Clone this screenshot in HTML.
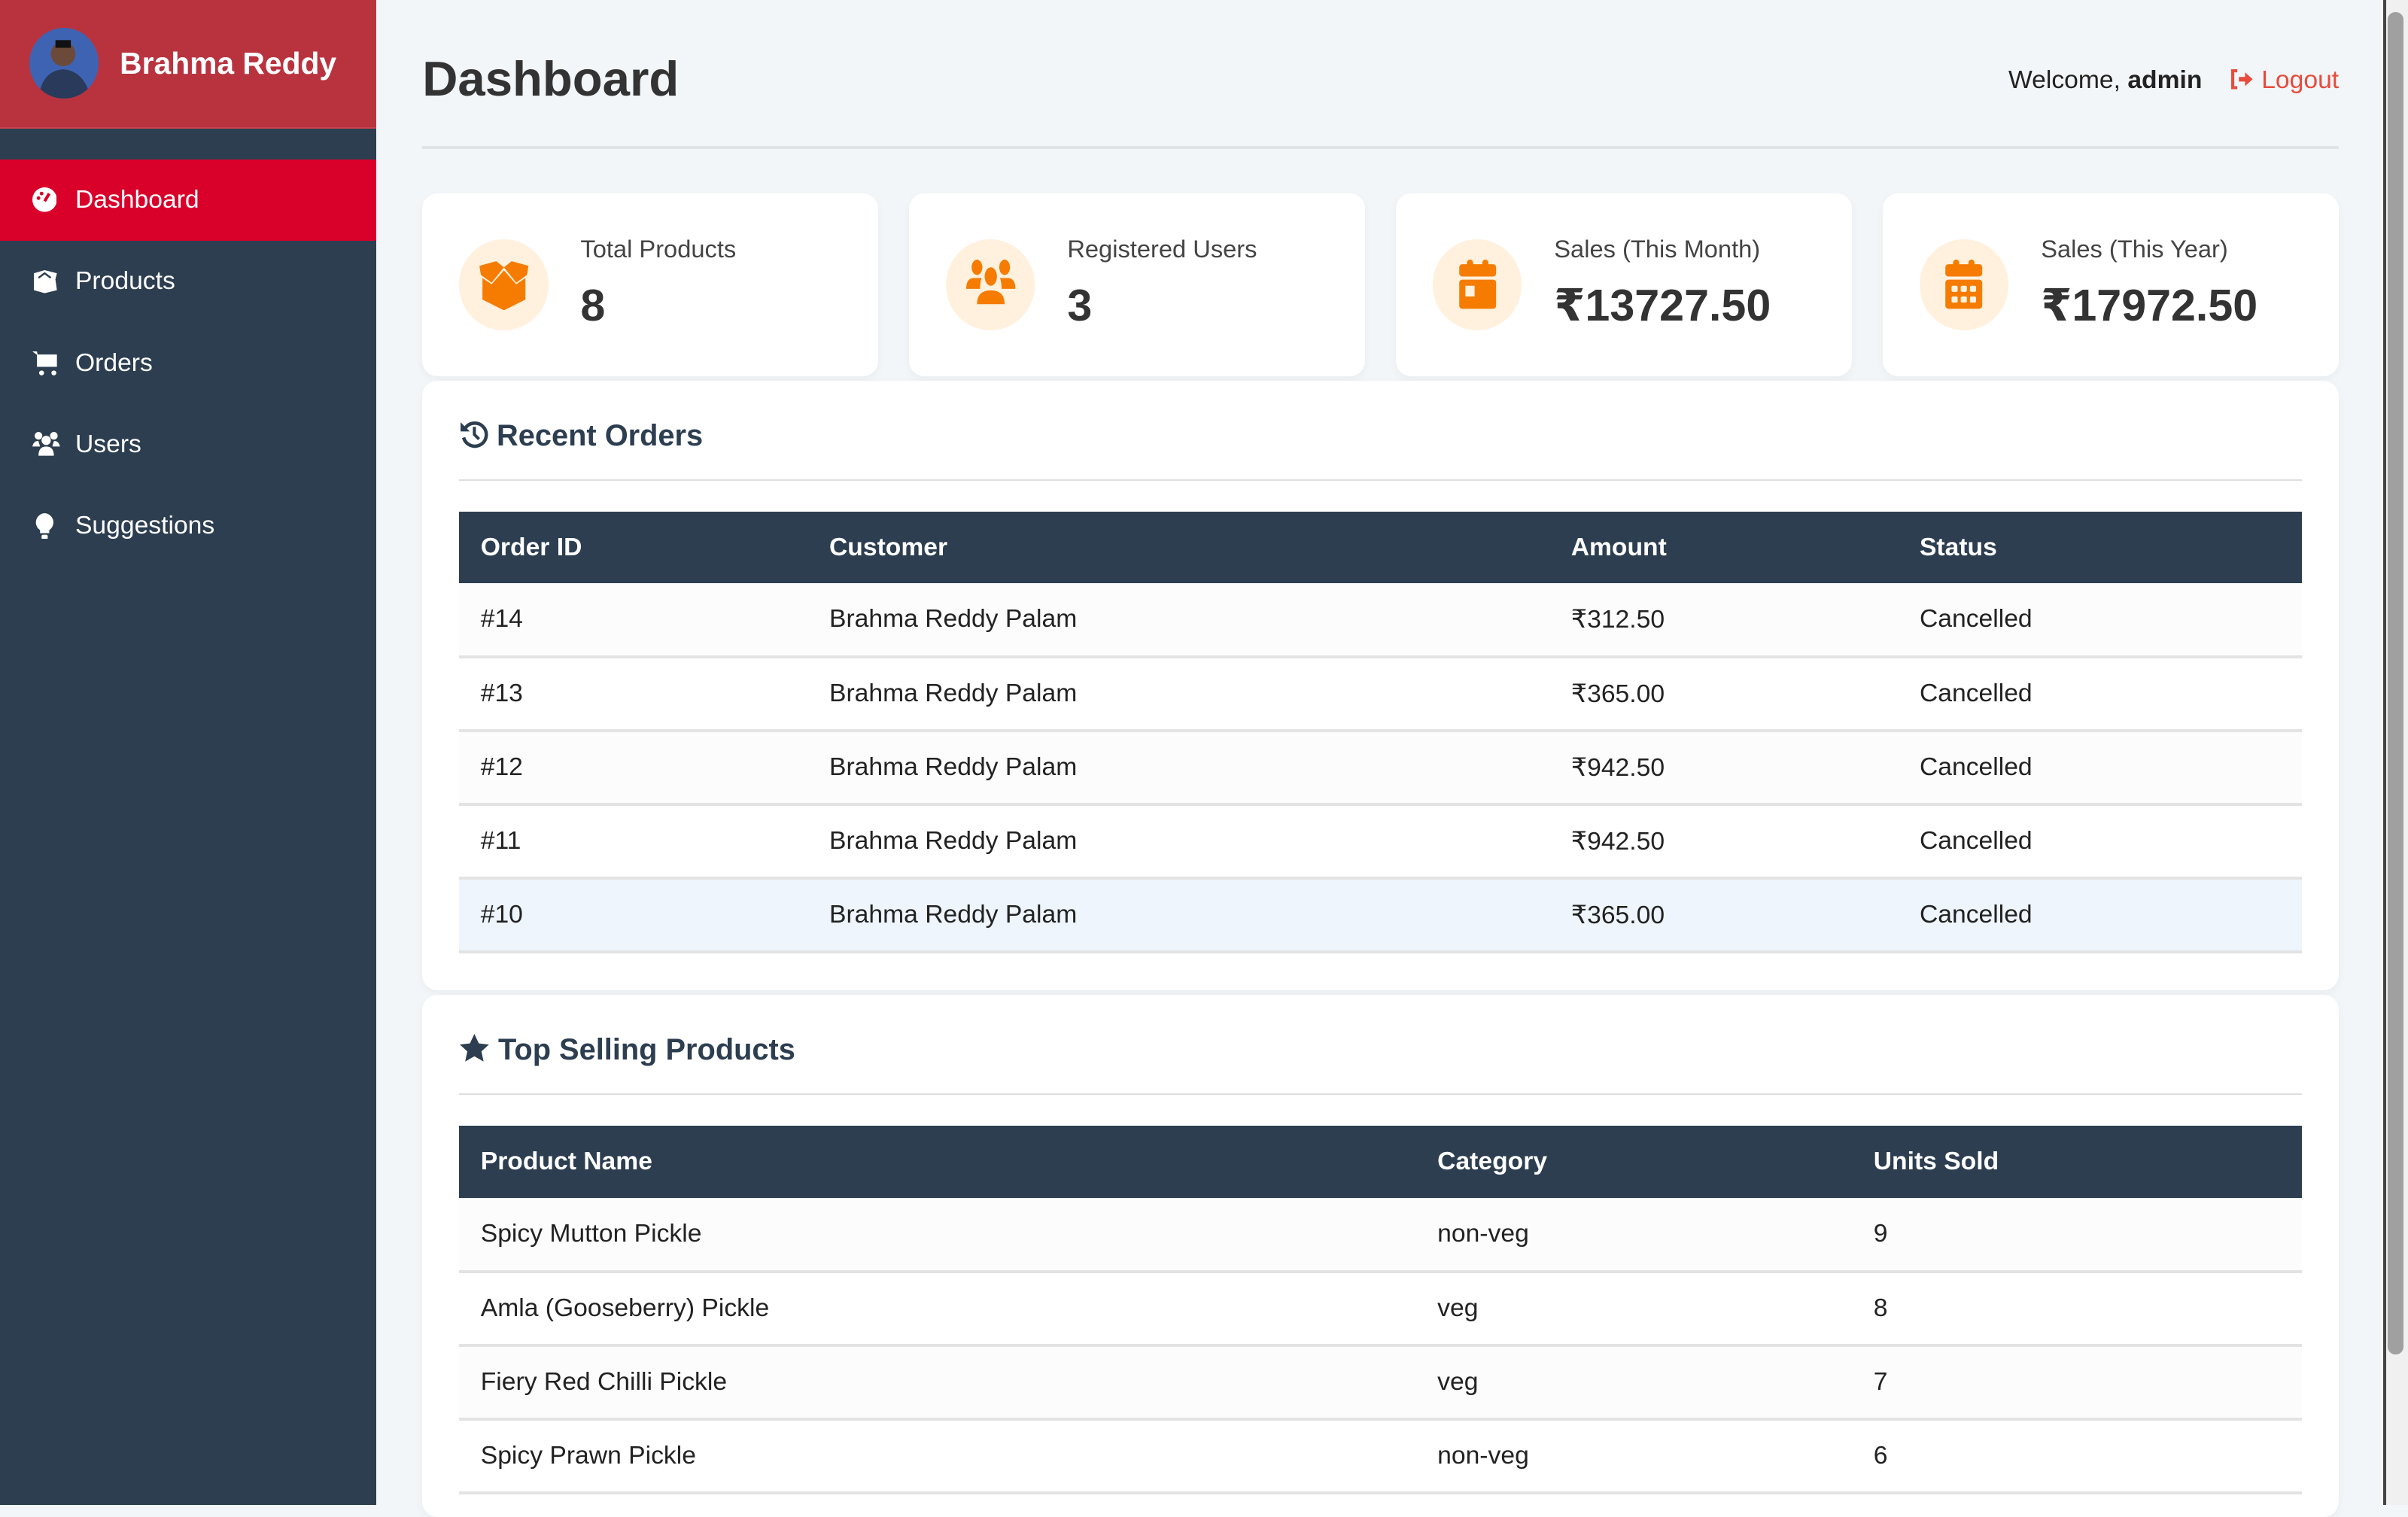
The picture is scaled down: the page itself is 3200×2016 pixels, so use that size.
<!DOCTYPE html>
<html><head><meta charset="utf-8"><style>
html{zoom:2.0408}
*{box-sizing:border-box;margin:0;padding:0}
body{width:1568px;height:980px;overflow:hidden;background:#f2f6f9;font-family:"Liberation Sans","DejaVu Sans",sans-serif;color:#333;position:relative}
.sb{position:absolute;left:0;top:0;width:245px;height:980px;background:#2c3e50}
.sbh{height:84px;background:#b9333f;border-bottom:1px solid #c94452;position:relative}
.av{position:absolute;left:19px;top:18px;width:45px;height:46px;border-radius:50%;background:#3f63b3;overflow:hidden}
.sbh .nm{position:absolute;left:78px;top:30px;color:#fff;font-weight:bold;font-size:20px}
.nav{position:absolute;left:0;width:245px;height:53px;color:#fff;font-size:16.5px;line-height:53px;padding-left:49px}
.nav svg{position:absolute;left:21px;top:18px}
.act{background:#d9002a}
h1{position:absolute;left:275px;top:33px;font-size:32px;font-weight:bold;color:#333}
.wel{position:absolute;right:45px;top:43px;font-size:16.5px;color:#222}
.wel b{margin-right:18px}
.wel span{color:#e74c3c}
.hr{position:absolute;height:2px;background:#e1e4e6}
.card{position:absolute;top:126px;width:297px;height:119px;background:#fff;border-radius:10px;box-shadow:0 2px 6px rgba(0,0,0,.04)}
.ic{position:absolute;left:24px;top:30px;width:58px;height:59px;border-radius:50%;background:#fff1de}
.ic svg{position:absolute;left:12px;top:12px}
.lbl{position:absolute;left:103px;top:27px;font-size:16px;color:#444}
.val{position:absolute;left:103px;top:56px;font-size:29px;font-weight:bold;color:#333}
.panel{position:absolute;left:275px;width:1248px;background:#fff;border-radius:10px;box-shadow:0 2px 6px rgba(0,0,0,.04)}
.pt{position:absolute;left:24px;font-size:19.5px;font-weight:bold;color:#2c3e50}
table{position:absolute;left:24px;width:1200px;border-collapse:collapse;font-size:16.5px}
th{background:#2c3e50;color:#fff;text-align:left;height:47px;padding-left:14px;font-weight:bold}
td{height:48px;padding-left:14px;border-bottom:2px solid #e3e3e3;color:#222}
tr:nth-child(even) td{background:#fcfcfc}
tr.hv td{background:#eef5fc}
.scr{position:absolute;left:1552px;top:0;width:16px;height:980px;background:#f0f0f0;border-left:2px solid #444}
.thumb{position:absolute;left:1555px;top:8px;width:10px;height:874px;background:#a0a0a0;border-radius:5px}
</style></head><body>
<div class="sb">
 <div class="sbh"><div class="av"><svg width="45" height="46"><circle cx="22" cy="17" r="8" fill="#6b4a3a"/><rect x="17" y="8" width="10" height="5" fill="#111"/><path d="M6 46 Q8 28 22 27 Q36 28 40 46Z" fill="#2a3a5a"/></svg></div><div class="nm">Brahma Reddy</div></div>
 <div class="nav act" style="top:104px"><svg width="16" height="16"><circle cx="8" cy="8" r="8" fill="#fff"/><path d="M8 9 L11 4" stroke="#d9002a" stroke-width="2"/><circle cx="4" cy="7" r="1.2" fill="#d9002a"/><circle cx="6" cy="4" r="1.2" fill="#d9002a"/></svg>Dashboard</div>
 <div class="nav" style="top:157px"><svg width="17" height="16"><path d="M1 3 L8 1 L16 3 L15 7 L16 14 L8 16 L1 14 L1 7Z" fill="#fff"/><path d="M4 6 L8 3 L12 6" stroke="#2c3e50" stroke-width="1.2" fill="none"/></svg>Products</div>
 <div class="nav" style="top:210px"><svg width="17" height="17"><path d="M0 1 H3 L5 11 H15 L16 4 H4" fill="#fff"/><rect x="3" y="3" width="13" height="8" fill="#fff"/><circle cx="6" cy="15" r="1.6" fill="#fff"/><circle cx="14" cy="15" r="1.6" fill="#fff"/></svg>Orders</div>
 <div class="nav" style="top:263px"><svg width="18" height="16"><circle cx="4" cy="3" r="2.5" fill="#fff"/><circle cx="14" cy="3" r="2.5" fill="#fff"/><circle cx="9" cy="6" r="3" fill="#fff"/><path d="M0 10 Q1 6 4 6.5 L5 10Z M18 10 Q17 6 14 6.5 L13 10Z M4 16 Q4 10 9 10 Q14 10 14 16Z" fill="#fff"/></svg>Users</div>
 <div class="nav" style="top:316px"><svg width="16" height="17"><path d="M8 0 A6 6 0 0 1 11 11 L11 13 H5 L5 11 A6 6 0 0 1 8 0Z" fill="#fff"/><rect x="6" y="14" width="4" height="3" rx="1" fill="#fff"/></svg>Suggestions</div>
</div>
<h1>Dashboard</h1>
<div class="wel">Welcome, <b>admin</b><span><svg width="16" height="13" style="vertical-align:-1px"><path d="M5 1 H2 V12 H5" stroke="#e74c3c" stroke-width="2" fill="none"/><path d="M6 5 H10 V2 L15 6.5 L10 11 V8 H6Z" fill="#e74c3c"/></svg> Logout</span></div>
<div class="hr" style="left:275px;top:95px;width:1248px"></div>
<div class="card" style="left:275px"><div class="ic"><svg width="34" height="34"><path d="M1 5 L12 2 L17 6 L22 2 L33 5 L32 11 L25 16 L17 6 L9 16 L2 11Z" fill="#f57c00"/><path d="M3 13 L9 17 L17 8 L25 17 L31 13 V27 L17 34 L3 27Z" fill="#f57c00"/></svg></div><div class="lbl">Total Products</div><div class="val">8</div></div>
<div class="card" style="left:592px"><div class="ic"><svg width="34" height="34"><ellipse cx="8" cy="6" rx="3.5" ry="5" fill="#f57c00"/><ellipse cx="26" cy="6" rx="3.5" ry="5" fill="#f57c00"/><ellipse cx="17" cy="12" rx="4" ry="6" fill="#f57c00"/><path d="M1 20 Q1 13 6 13 L11 13 Q10 16 10 20Z M33 20 Q33 13 28 13 L23 13 Q24 16 24 20Z M8 30 Q8 21 17 21 Q26 21 26 30Z" fill="#f57c00"/></svg></div><div class="lbl">Registered Users</div><div class="val">3</div></div>
<div class="card" style="left:909px"><div class="ic"><svg width="34" height="34"><rect x="10" y="1" width="4" height="6" rx="2" fill="#f57c00"/><rect x="20" y="1" width="4" height="6" rx="2" fill="#f57c00"/><rect x="5" y="4" width="24" height="8" rx="2" fill="#f57c00"/><rect x="5" y="14" width="24" height="19" rx="2" fill="#f57c00"/><rect x="9" y="18" width="6" height="7" fill="#fff1de"/></svg></div><div class="lbl">Sales (This Month)</div><div class="val">₹13727.50</div></div>
<div class="card" style="left:1226px"><div class="ic"><svg width="34" height="34"><rect x="10" y="1" width="4" height="6" rx="2" fill="#f57c00"/><rect x="20" y="1" width="4" height="6" rx="2" fill="#f57c00"/><rect x="5" y="4" width="24" height="8" rx="2" fill="#f57c00"/><rect x="5" y="14" width="24" height="19" rx="2" fill="#f57c00"/><g fill="#fff1de"><rect x="9" y="18" width="4" height="4" rx="1"/><rect x="15" y="18" width="4" height="4" rx="1"/><rect x="21" y="18" width="4" height="4" rx="1"/><rect x="9" y="25" width="4" height="4" rx="1"/><rect x="15" y="25" width="4" height="4" rx="1"/><rect x="21" y="25" width="4" height="4" rx="1"/></g></svg></div><div class="lbl">Sales (This Year)</div><div class="val">₹17972.50</div></div>

<div class="panel" style="top:248px;height:397px">
 <div class="pt" style="top:25px"><svg width="19" height="19" style="vertical-align:-2px"><path d="M4 6 A7.5 7.5 0 1 1 3 12" stroke="#2c3e50" stroke-width="2.2" fill="none"/><path d="M1 2 L1 8 L7 8Z" fill="#2c3e50"/><path d="M10 5 V10 L13 13" stroke="#2c3e50" stroke-width="2" fill="none"/></svg> Recent Orders</div>
 <div class="hr" style="left:24px;top:64px;width:1200px;height:1px;background:#dedede"></div>
 <table style="top:85px"><tr><th style="width:227px">Order ID</th><th style="width:483px">Customer</th><th style="width:227px">Amount</th><th>Status</th></tr>
 <tr><td>#14</td><td>Brahma Reddy Palam</td><td>₹312.50</td><td>Cancelled</td></tr>
 <tr><td>#13</td><td>Brahma Reddy Palam</td><td>₹365.00</td><td>Cancelled</td></tr>
 <tr><td>#12</td><td>Brahma Reddy Palam</td><td>₹942.50</td><td>Cancelled</td></tr>
 <tr><td>#11</td><td>Brahma Reddy Palam</td><td>₹942.50</td><td>Cancelled</td></tr>
 <tr class="hv"><td>#10</td><td>Brahma Reddy Palam</td><td>₹365.00</td><td>Cancelled</td></tr></table>
</div>
<div class="panel" style="top:648px;height:340px">
 <div class="pt" style="top:25px"><svg width="20" height="19" style="vertical-align:-2px"><path d="M10 0 L12.9 6.2 L19.5 6.9 L14.6 11.4 L16 18 L10 14.6 L4 18 L5.4 11.4 L0.5 6.9 L7.1 6.2Z" fill="#2c3e50"/></svg> Top Selling Products</div>
 <div class="hr" style="left:24px;top:64px;width:1200px;height:1px;background:#dedede"></div>
 <table style="top:85px"><tr><th style="width:623px">Product Name</th><th style="width:284px">Category</th><th>Units Sold</th></tr>
 <tr><td>Spicy Mutton Pickle</td><td>non-veg</td><td>9</td></tr>
 <tr><td>Amla (Gooseberry) Pickle</td><td>veg</td><td>8</td></tr>
 <tr><td>Fiery Red Chilli Pickle</td><td>veg</td><td>7</td></tr>
 <tr><td>Spicy Prawn Pickle</td><td>non-veg</td><td>6</td></tr></table>
</div>
<div class="scr"></div><div class="thumb"></div>
</body></html>
